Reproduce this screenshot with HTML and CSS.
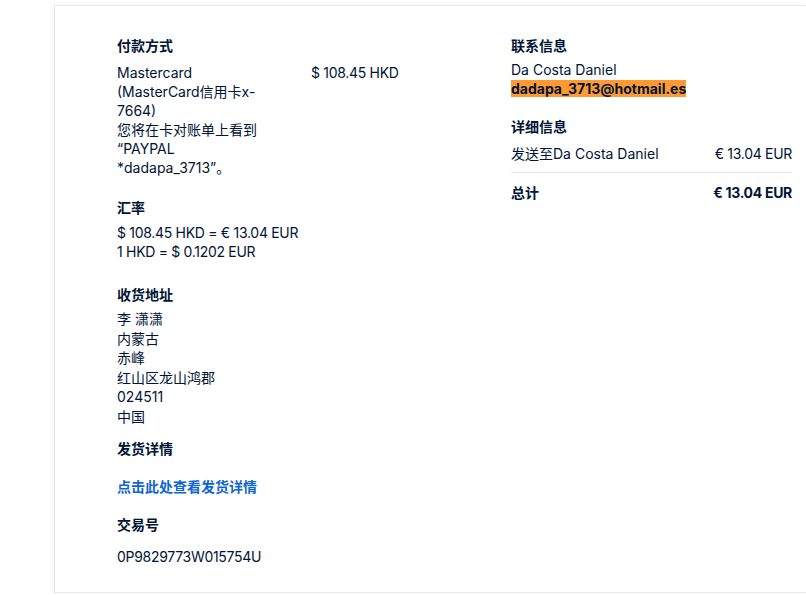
FILE: index.html
```html
<!DOCTYPE html>
<html lang="zh-CN">
<head>
<meta charset="utf-8">
<title>交易详情</title>
<link rel="stylesheet" href="styles.css">
</head>
<body>
<div class="card">
  <div class="col left">
    <section class="block pay">
      <h3 class="h">付款方式</h3>
      <div class="pay-row">
        <div class="pay-name">Mastercard (MasterCard信用卡x-7664)<br>您将在卡对账单上看到“PAYPAL *dadapa_3713”。</div>
        <div class="pay-amt num">$ 108.45 HKD</div>
      </div>
    </section>
    <section class="block rate">
      <h3 class="h">汇率</h3>
      <div class="lines num">$ 108.45 HKD = € 13.04 EUR<br>1 HKD = $ 0.1202 EUR</div>
    </section>
    <section class="block addr">
      <h3 class="h">收货地址</h3>
      <div class="addr-lines">李 潇潇<br>内蒙古<br>赤峰<br>红山区龙山鸿郡<br>024511<br>中国</div>
    </section>
    <section class="block ship">
      <h3 class="h">发货详情</h3>
      <a class="link" href="#">点击此处查看发货详情</a>
    </section>
    <section class="block txn">
      <h3 class="h">交易号</h3>
      <div class="txid num">0P9829773W015754U</div>
    </section>
  </div>
  <div class="col right">
    <section class="block contact">
      <h3 class="h">联系信息</h3>
      <div class="c-name">Da Costa Daniel</div>
      <div class="c-mail"><span class="mark">dadapa_3713@hotmail.es</span></div>
    </section>
    <section class="block detail">
      <h3 class="h">详细信息</h3>
      <div class="d-row"><span>发送至Da Costa Daniel</span><span class="num">€ 13.04 EUR</span></div>
      <div class="d-total"><span>总计</span><span class="num">€ 13.04 EUR</span></div>
    </section>
  </div>
</div>
</body>
</html>
```
FILE: styles.css
```css
* { box-sizing: border-box; }
html { overflow: hidden; }
html, body { margin: 0; padding: 0; background: #fff; }
body {
  font-family: Inter, "Noto Sans CJK SC", sans-serif;
  font-size: 14px;
  color: #001435;
  padding-top: 5px;
  padding-left: 54px;
  height: 595px;
  overflow: hidden;
}
.card {
  width: 752px;
  border-top: 1px solid #e9e9e9;
  border-left: 1px solid #e6e6e6;
  border-bottom: 1px solid #e9e9e9;
  box-shadow: -3px 0 4px rgba(0,0,0,0.03);
  display: flex;
  padding: 30px 0 24px 62px;
  height: 588px;
}
.col.left { width: 394px; }
.col.right { width: 281px; }
.num { letter-spacing: -0.3px; }
.h {
  margin: 0;
  font-size: 14px;
  font-weight: 700;
  line-height: 20px;
}
.pay-row {
  display: flex;
  margin-top: 7px;
  line-height: 19px;
}
.pay-name { width: 150px; margin-right: 44px; }
.rate { margin-top: 21px; }
.rate .lines { margin-top: 5px; line-height: 19px; }
.addr { margin-top: 24px; }
.addr-lines { margin-top: 4px; line-height: 19.6px; }
.ship { margin-top: 12px; }
.link {
  display: block;
  margin-top: 18px;
  color: #0d66d0;
  font-weight: 700;
  text-decoration: none;
  line-height: 20px;
}
.txn { margin-top: 18px; }
.txid { margin-top: 12px; line-height: 20px; }
.c-name { margin-top: 4px; line-height: 19px; }
.c-mail { line-height: 19px; font-weight: 700; }
.mark { background: #ff9a33; }
.detail { margin-top: 19px; }
.d-row, .d-total {
  display: flex;
  justify-content: space-between;
}
.d-row {
  margin-top: 7px;
  line-height: 20px;
  padding-bottom: 8px;
  border-bottom: 1px solid #e6e6e6;
}
.d-total {
  margin-top: 10px;
  font-weight: 700;
  line-height: 20px;
}
```
